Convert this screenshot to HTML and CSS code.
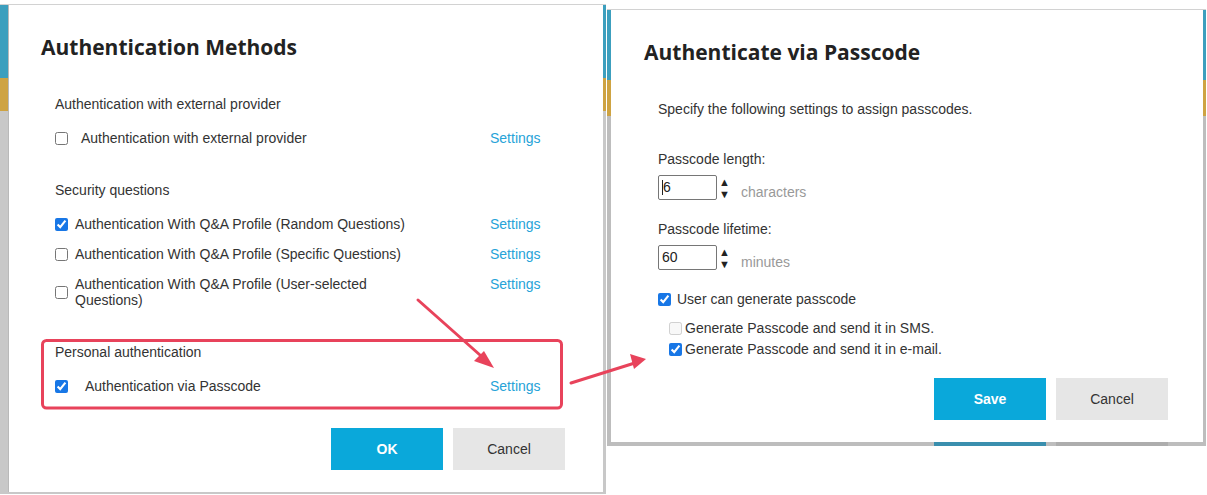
FILE: index.html
```html
<!DOCTYPE html>
<html>
<head>
<meta charset="utf-8">
<link rel="stylesheet" href="styles.css">
</head>
<body>
<div class="canvas">
  <div class="shot shot-left">
    <div class="dialog dialog-left">
      <h2 class="title">Authentication Methods</h2>
      <div class="label first">Authentication with external provider</div>
      <div class="row r-ext">
        <label class="opt"><input type="checkbox"><span class="txt gap13">Authentication with external provider</span></label>
        <a class="link">Settings</a>
      </div>
      <div class="label sec">Security questions</div>
      <div class="row r-qa first-qa">
        <label class="opt"><input type="checkbox" checked><span class="txt gap7">Authentication With Q&amp;A Profile (Random Questions)</span></label>
        <a class="link">Settings</a>
      </div>
      <div class="row r-qa">
        <label class="opt"><input type="checkbox"><span class="txt gap7">Authentication With Q&amp;A Profile (Specific Questions)</span></label>
        <a class="link">Settings</a>
      </div>
      <div class="row r-qa">
        <label class="opt"><input type="checkbox"><span class="txt gap7">Authentication With Q&amp;A Profile (User-selected Questions)</span></label>
        <a class="link">Settings</a>
      </div>
      <div class="label personal">Personal authentication</div>
      <div class="row r-pass">
        <label class="opt"><input type="checkbox" checked><span class="txt gap17">Authentication via Passcode</span></label>
        <a class="link">Settings</a>
      </div>
      <div class="actions actions-left">
        <button class="btn primary">OK</button>
        <button class="btn secondary">Cancel</button>
      </div>
    </div>
  </div>
  <div class="shot shot-right">
    <div class="dialog dialog-right">
      <h2 class="title">Authenticate via Passcode</h2>
      <div class="label first">Specify the following settings to assign passcodes.</div>
      <div class="label field-label">Passcode length:</div>
      <div class="field">
        <div class="num"><span class="caret"></span>6</div>
        <div class="spin"><span>&#9650;</span><span>&#9660;</span></div>
        <span class="unit">characters</span>
      </div>
      <div class="label field-label">Passcode lifetime:</div>
      <div class="field">
        <div class="num">60</div>
        <div class="spin"><span>&#9650;</span><span>&#9660;</span></div>
        <span class="unit">minutes</span>
      </div>
      <label class="opt gen"><input type="checkbox" checked><span class="txt gap6">User can generate passcode</span></label>
      <div class="sub">
        <label class="opt"><input type="checkbox" disabled><span class="txt gap3">Generate Passcode and send it in SMS.</span></label>
        <label class="opt"><input type="checkbox" checked><span class="txt gap3">Generate Passcode and send it in e-mail.</span></label>
      </div>
      <div class="actions actions-right">
        <button class="btn primary">Save</button>
        <button class="btn secondary">Cancel</button>
      </div>
    </div>
    <div class="peek"><span class="pk-teal"></span><span class="pk-gray"></span></div>
  </div>
</div>
<svg class="notes" width="1207" height="495" viewBox="0 0 1207 495">
  <rect x="42.5" y="340.5" width="519" height="67.5" rx="4" fill="none" stroke="#e8435b" stroke-width="3"/>
  <line x1="418" y1="300" x2="489" y2="363" stroke="#e8435b" stroke-width="3" stroke-linecap="round"/>
  <polygon points="494,368 474,361 484,351" fill="#e8435b"/>
  <line x1="571" y1="383" x2="638" y2="362" stroke="#e8435b" stroke-width="3" stroke-linecap="round"/>
  <polygon points="646,359 630,354 634,369" fill="#e8435b"/>
</svg>
</body>
</html>
```
FILE: styles.css
```css
* { box-sizing: border-box; }
html, body { margin: 0; padding: 0; }
body {
  width: 1207px;
  height: 495px;
  overflow: hidden;
  background: #fff;
  position: relative;
  font-family: "Liberation Sans", Arial, sans-serif;
  font-size: 14px;
  color: #333;
}
.canvas { display: flex; align-items: flex-start; }
.shot {
  border-top: 1px solid #d2d2d2;
  background: linear-gradient(to bottom, #3c9fbe 0, #3c9fbe 73px, #cea342 73px, #cea342 106px, #c8c8c8 106px);
}
.shot-left {
  margin-top: 4px;
  width: 606px;
  padding: 0 3px 2px 8px;
}
.shot-right {
  margin-top: 9px;
  margin-left: 1px;
  width: 599px;
  padding: 0 3px 0 4px;
  background: linear-gradient(to bottom, #3c9fbe 0, #3c9fbe 70px, #cea342 70px, #cea342 106px, #bdbdbd 106px);
}
.dialog {
  background: #fff;
  display: flex;
  flex-direction: column;
  padding: 28px 0 22px 47px;
}
.dialog-left { height: 487px; padding-right: 38px; padding-left: 46px; border-left: 1px solid #b9b9b9; }
.dialog-right { height: 432px; padding-right: 35px; }
.title {
  margin: 0 0 0 -14px;
  font-family: "Open Sans", sans-serif;
  font-weight: 700;
  font-size: 21px;
  line-height: 28px;
  color: #222;
}
.label { line-height: 20px; }
.label.first { margin-top: 33px; }
.label.sec { margin-top: 32px; }
.label.personal { margin-top: 34px; }
.row { display: flex; align-items: flex-start; }
.opt { display: flex; align-items: center; }
.opt input {
  margin: 0;
  width: 13px;
  height: 13px;
  flex: none;
  accent-color: #1877e6;
}
.txt { display: block; }
.gap13 { margin-left: 13px; }
.gap7 { margin-left: 7px; }
.gap6 { margin-left: 6px; }
.gap17 { margin-left: 17px; }
.gap3 { margin-left: 3px; }
.row .opt { width: 435px; }
.row .txt { width: 340px; }
.r-ext { margin-top: 14px; line-height: 20px; }
.r-qa { margin-top: 14px; line-height: 16px; }
.r-qa.first-qa { margin-top: 16px; }
.r-pass { margin-top: 14px; line-height: 20px; }
.link { color: #27a3d8; text-decoration: none; }
.actions { display: flex; justify-content: flex-end; gap: 10px; margin-top: auto; }
.btn {
  width: 112px;
  height: 42px;
  border: 0;
  border-radius: 0;
  font-family: "Liberation Sans", Arial, sans-serif;
  font-size: 14px;
}
.btn.primary { background: #0aa8da; color: #fff; font-weight: 700; }
.btn.secondary { background: #e6e6e6; color: #333; }
.field-label { margin-top: 30px; }
.field-label + .field { margin-top: 6px; }
.field + .field-label { margin-top: 19px; }
.field { display: flex; align-items: center; height: 25px; }
.num {
  width: 59px;
  height: 25px;
  border: 1px solid #767676;
  border-radius: 2px;
  padding-left: 3px;
  line-height: 23px;
  display: flex;
  align-items: center;
  color: #222;
}
.caret { width: 1px; height: 15px; background: #222; }
.spin {
  display: flex;
  flex-direction: column;
  margin-left: 2px;
  font-size: 11px;
  line-height: 12px;
  color: #222;
  width: 9px;
}
.unit { margin-left: 13px; color: #999; margin-top: 8px; }
.gen { margin-top: 19px; line-height: 20px; }
.sub { margin-top: 9px; padding-left: 11px; display: flex; flex-direction: column; gap: 1px; line-height: 20px; }
.peek { height: 4px; display: flex; padding-left: 327px; gap: 10px; background: #bdbdbd; margin-left: -4px; margin-right: -3px; }
.peek span { width: 112px; height: 4px; }
.pk-teal { background: #3a8fae; }
.pk-gray { background: #adadad; }
.notes { position: absolute; left: 0; top: 0; pointer-events: none; }
```
